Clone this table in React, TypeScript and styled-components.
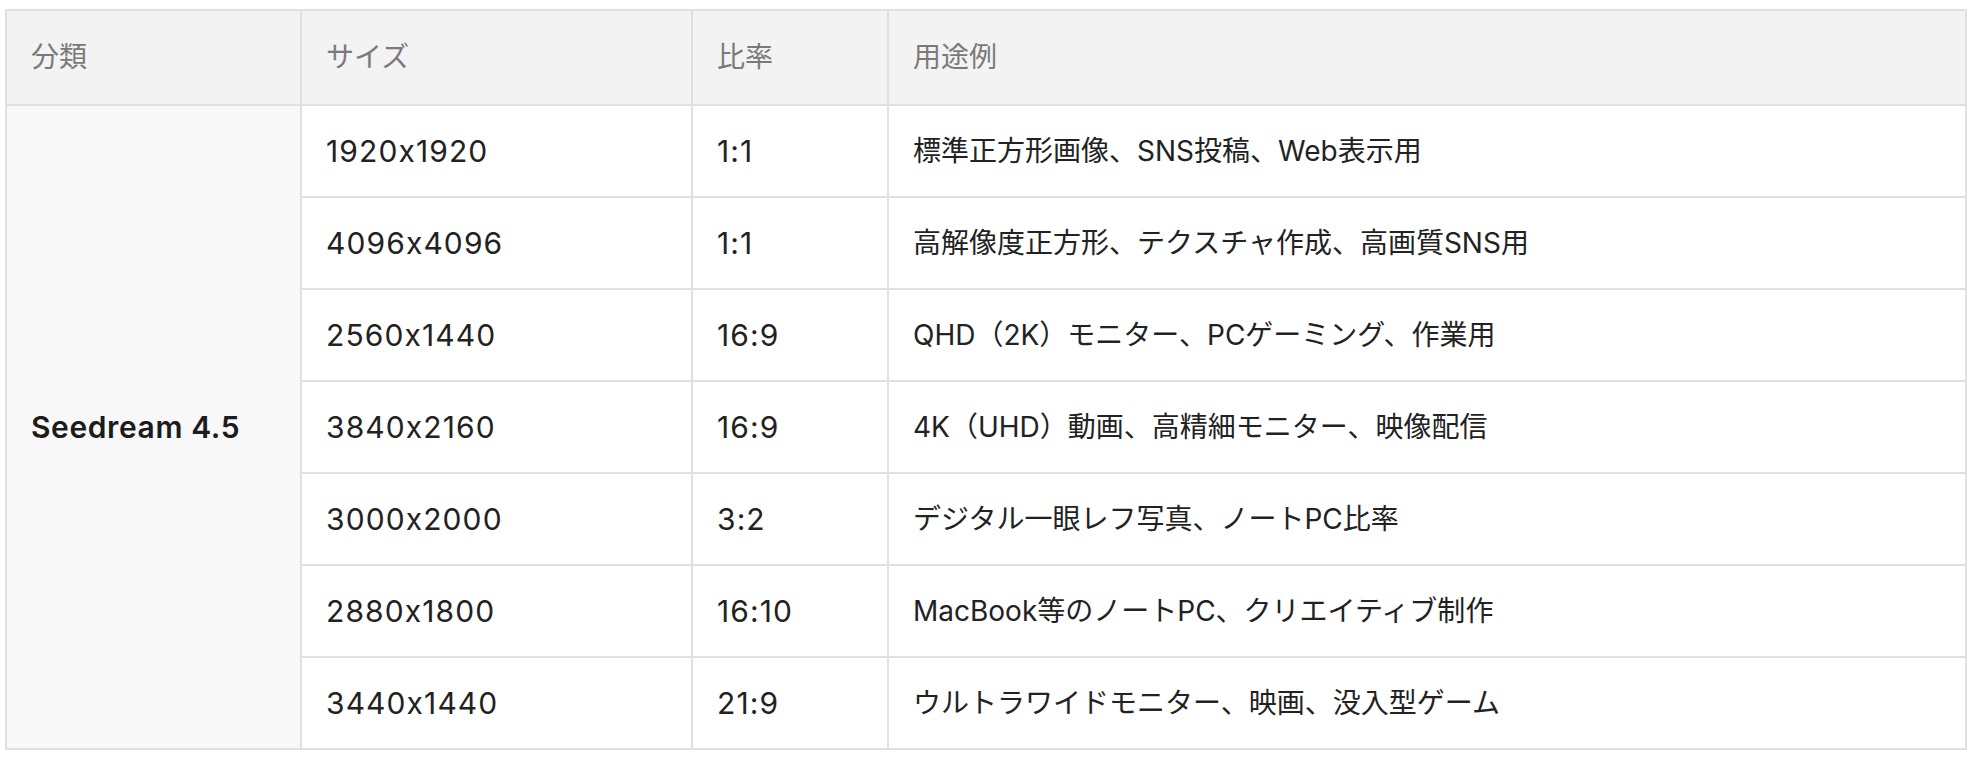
import styled, { createGlobalStyle } from "styled-components";

const GlobalStyle = createGlobalStyle`
  body {
    margin: 0;
    background: #fff;
    font-family: Inter, "Noto Sans CJK JP", sans-serif;
    font-feature-settings: "calt" 0;
  }
`;

const Wrapper = styled.div`
  padding: 9px 5px;
`;

const Table = styled.table`
  width: 1962px;
  table-layout: fixed;
  border-collapse: collapse;
  border: 2px solid #e0e0e0;
  font-size: 28px;
  line-height: 42px;
  color: #222;
`;

const HeadCell = styled.th`
  text-align: left;
  font-weight: 400;
  color: #7a7a7a;
  background: #f3f3f3;
  border: 2px solid #e0e0e0;
  padding: 25px 24px 26px;
`;

const Cell = styled.td<{ $latin?: boolean }>`
  border: 2px solid #e0e0e0;
  padding: 24px 24px;
  white-space: nowrap;
  font-size: ${(p) => (p.$latin ? "30px" : "28px")};
  letter-spacing: ${(p) => (p.$latin ? "1.1px" : "0")};
`;

const ModelCell = styled(Cell)`
  background: #f8f8f8;
  font-weight: 600;
  color: #1c1c1c;
  letter-spacing: 0.6px;
`;

interface SizeRow {
  size: string;
  ratio: string;
  usage: string;
}

const rows: SizeRow[] = [
  { size: "1920x1920", ratio: "1:1", usage: "標準正方形画像、SNS投稿、Web表示用" },
  { size: "4096x4096", ratio: "1:1", usage: "高解像度正方形、テクスチャ作成、高画質SNS用" },
  { size: "2560x1440", ratio: "16:9", usage: "QHD（2K）モニター、PCゲーミング、作業用" },
  { size: "3840x2160", ratio: "16:9", usage: "4K（UHD）動画、高精細モニター、映像配信" },
  { size: "3000x2000", ratio: "3:2", usage: "デジタル一眼レフ写真、ノートPC比率" },
  { size: "2880x1800", ratio: "16:10", usage: "MacBook等のノートPC、クリエイティブ制作" },
  { size: "3440x1440", ratio: "21:9", usage: "ウルトラワイドモニター、映画、没入型ゲーム" },
];

export default function App() {
  return (
    <>
      <GlobalStyle />
      <Wrapper>
        <Table>
          <colgroup>
            <col style={{ width: 295 }} />
            <col style={{ width: 391 }} />
            <col style={{ width: 196 }} />
            <col />
          </colgroup>
          <thead>
            <tr>
              <HeadCell>分類</HeadCell>
              <HeadCell>サイズ</HeadCell>
              <HeadCell>比率</HeadCell>
              <HeadCell>用途例</HeadCell>
            </tr>
          </thead>
          <tbody>
            {rows.map((row, i) => (
              <tr key={row.size}>
                {i === 0 && (
                  <ModelCell $latin rowSpan={rows.length}>
                    Seedream 4.5
                  </ModelCell>
                )}
                <Cell $latin>{row.size}</Cell>
                <Cell $latin>{row.ratio}</Cell>
                <Cell>{row.usage}</Cell>
              </tr>
            ))}
          </tbody>
        </Table>
      </Wrapper>
    </>
  );
}
